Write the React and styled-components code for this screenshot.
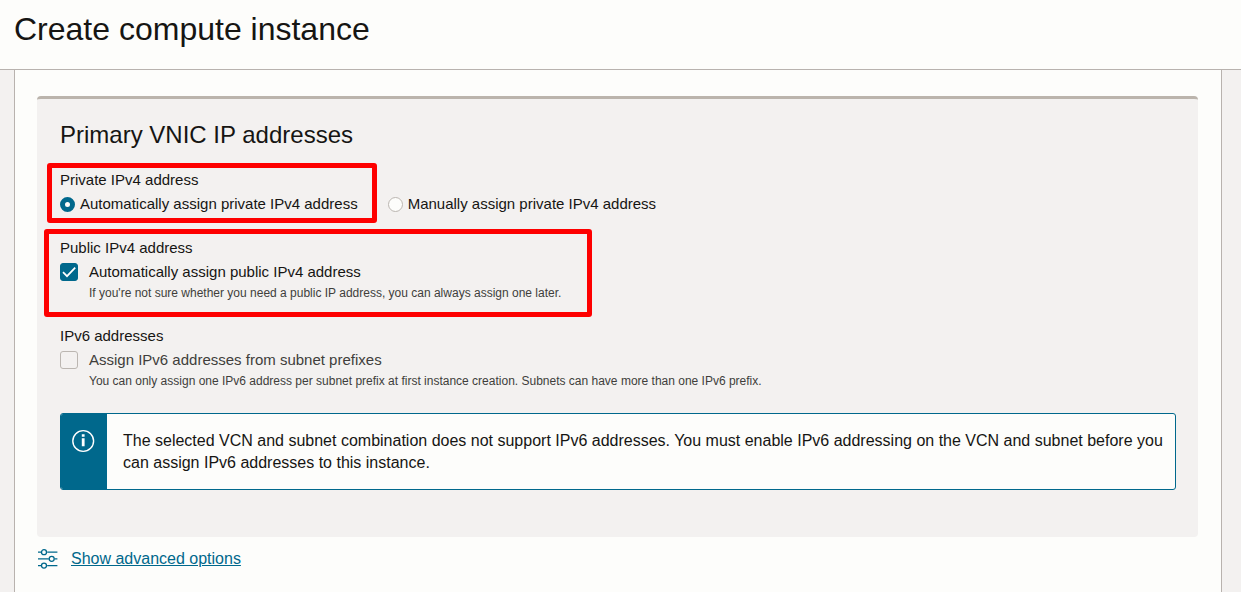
import React from "react";
import styled, { createGlobalStyle } from "styled-components";

const GlobalStyle = createGlobalStyle`
  *, *::before, *::after { box-sizing: border-box; }
  body {
    margin: 0;
    background: #f3f1f0;
    color: #161513;
    font-family: "Liberation Sans", Arial, sans-serif;
  }
`;

const TEAL = "#00688c";
const SURFACE = "#fdfdfb";
const LINE = "#b8b2ae";

const Page = styled.div`
  display: flex;
  flex-direction: column;
  min-height: 100vh;
`;

const Header = styled.header`
  padding: 11px 14px 22px;
  background: ${SURFACE};
  border-bottom: 1px solid ${LINE};
`;

const PageTitle = styled.h1`
  margin: 0;
  font-size: 32px;
  line-height: 36px;
  font-weight: 400;
`;

const Main = styled.main`
  flex: 1;
  margin: 0 19px 0 14px;
  padding: 26px 23px 20px 22px;
  background: ${SURFACE};
  border: solid ${LINE};
  border-width: 0 1px;
`;

const Panel = styled.section`
  padding: 22px 22px 47px 23px;
  background: #f3f1f0;
  border-top: 3px solid #bbb4ac;
  border-radius: 4px;
`;

const PanelTitle = styled.h2`
  margin: 0 0 21px;
  font-size: 24px;
  line-height: 28px;
  font-weight: 400;
`;

const Groups = styled.div`
  display: flex;
  flex-direction: column;
  align-items: flex-start;
  gap: 24px;
`;

const Group = styled.fieldset`
  position: relative;
  min-width: 0;
  margin: 0;
  padding: 0;
  border: 0;
`;

const GroupLabel = styled.legend`
  padding: 0 0 4px;
  font-size: 15px;
  line-height: 20px;
`;

const Highlight = styled.span`
  position: absolute;
  inset: ${(p) => p.$inset};
  border: 5px solid #fe0000;
  border-radius: 3px;
  pointer-events: none;
`;

const RadioRow = styled.div`
  display: flex;
  flex-wrap: wrap;
  gap: 30px;
`;

const RadioOption = styled.div`
  position: relative;
  display: flex;
  align-items: center;
  gap: 5px;
`;

const Radio = styled.input`
  appearance: none;
  width: 15px;
  height: 15px;
  margin: 0;
  background: ${SURFACE};
  border: 1px solid #bbb6b1;
  border-radius: 50%;

  &:checked {
    border: 5px solid ${TEAL};
  }
`;

const OptionLabel = styled.label`
  font-size: 15px;
  line-height: 20px;
  color: ${(p) => (p.$muted ? "#403e3b" : "inherit")};
`;

const CheckOption = styled.div`
  display: grid;
  grid-template-columns: 18px auto;
  column-gap: 11px;
  align-items: center;
`;

const CheckBox = styled.span`
  display: grid;

  & > * {
    grid-area: 1 / 1;
  }

  svg {
    pointer-events: none;
  }
`;

const CheckInput = styled.input`
  appearance: none;
  width: 18px;
  height: 18px;
  margin: 0;
  background: transparent;
  border: 1px solid #bbb6b1;
  border-radius: 3px;

  &:checked {
    background: ${TEAL};
    border-color: ${TEAL};
  }

  & + svg {
    visibility: hidden;
  }

  &:checked + svg {
    visibility: visible;
  }
`;

const Hint = styled.p`
  grid-column: 2;
  margin: 2px 0 0;
  font-size: 12px;
  line-height: 18px;
  color: #403e3b;
`;

const Alert = styled.div`
  display: flex;
  margin-top: 23px;
  background: ${SURFACE};
  border: 1px solid ${TEAL};
  border-radius: 3px;
  overflow: hidden;
`;

const AlertIcon = styled.div`
  flex: none;
  display: flex;
  justify-content: center;
  width: 46px;
  padding-top: 15px;
  background: ${TEAL};
`;

const AlertText = styled.p`
  margin: 0;
  padding: 16px 8px 15px 16px;
  font-size: 16px;
  line-height: 22px;
`;

const Advanced = styled.div`
  display: flex;
  align-items: center;
  gap: 13px;
  margin-top: 11px;
`;

const AdvancedLink = styled.a`
  font-size: 16px;
  line-height: 22px;
  color: ${TEAL};
  text-decoration: underline;
`;

function CheckField({ id, label, hint, checked, disabled }) {
  return (
    <CheckOption>
      <CheckBox>
        <CheckInput
          type="checkbox"
          id={id}
          defaultChecked={checked}
          disabled={disabled}
          aria-describedby={`${id}-hint`}
        />
        <svg width="18" height="18" viewBox="0 0 18 18" fill="none" aria-hidden="true">
          <path d="M3 9.2 7 13.2 15.2 4.6" stroke="#fff" strokeWidth="1.7" />
        </svg>
      </CheckBox>
      <OptionLabel htmlFor={id} $muted={disabled}>{label}</OptionLabel>
      <Hint id={`${id}-hint`}>{hint}</Hint>
    </CheckOption>
  );
}

function InfoIcon() {
  return (
    <svg width="24" height="24" viewBox="0 0 24 24" fill="none" aria-hidden="true">
      <circle cx="11.2" cy="12" r="10.4" stroke="#fff" strokeWidth="1.4" />
      <path d="M9.8 5.2h2.8v2.5H9.8zM9.8 9.3h2.8v8H9.8z" fill="#fff" />
    </svg>
  );
}

function SlidersIcon() {
  return (
    <svg width="21" height="20" viewBox="-1 0 21 20" fill="none" stroke={TEAL} strokeWidth="1.3" aria-hidden="true">
      <path d="M0 3.2h3.2M9.2 3.2H19.4M0 9.8h10.8M16.6 9.8h2.8M0 16.6h3.2M9.2 16.6H19.4" />
      <circle cx="6" cy="3.2" r="2.5" />
      <circle cx="13.7" cy="9.8" r="2.5" />
      <circle cx="6" cy="16.6" r="2.5" />
    </svg>
  );
}

export default function App() {
  return (
    <Page>
      <GlobalStyle />
      <Header>
        <PageTitle>Create compute instance</PageTitle>
      </Header>
      <Main>
        <Panel>
          <PanelTitle>Primary VNIC IP addresses</PanelTitle>
          <Groups>
            <Group>
              <GroupLabel>Private IPv4 address</GroupLabel>
              <RadioRow>
                <RadioOption>
                  <Radio type="radio" name="private-ip" id="private-auto" defaultChecked />
                  <OptionLabel htmlFor="private-auto">Automatically assign private IPv4 address</OptionLabel>
                  <Highlight $inset="-31px -19px -9px -13px" />
                </RadioOption>
                <RadioOption>
                  <Radio type="radio" name="private-ip" id="private-manual" />
                  <OptionLabel htmlFor="private-manual">Manually assign private IPv4 address</OptionLabel>
                </RadioOption>
              </RadioRow>
            </Group>
            <Group>
              <GroupLabel>Public IPv4 address</GroupLabel>
              <CheckField
                id="public-auto"
                label="Automatically assign public IPv4 address"
                hint="If you're not sure whether you need a public IP address, you can always assign one later."
                checked
              />
              <Highlight $inset="-33px -31px -15px -16px" />
            </Group>
            <Group>
              <GroupLabel>IPv6 addresses</GroupLabel>
              <CheckField
                id="ipv6-assign"
                label="Assign IPv6 addresses from subnet prefixes"
                hint="You can only assign one IPv6 address per subnet prefix at first instance creation. Subnets can have more than one IPv6 prefix."
                disabled
              />
            </Group>
          </Groups>
          <Alert role="status">
            <AlertIcon>
              <InfoIcon />
            </AlertIcon>
            <AlertText>
              The selected VCN and subnet combination does not support IPv6 addresses. You must enable IPv6
              addressing on the VCN and subnet before you can assign IPv6 addresses to this instance.
            </AlertText>
          </Alert>
        </Panel>
        <Advanced>
          <SlidersIcon />
          <AdvancedLink href="#advanced">Show advanced options</AdvancedLink>
        </Advanced>
      </Main>
    </Page>
  );
}
